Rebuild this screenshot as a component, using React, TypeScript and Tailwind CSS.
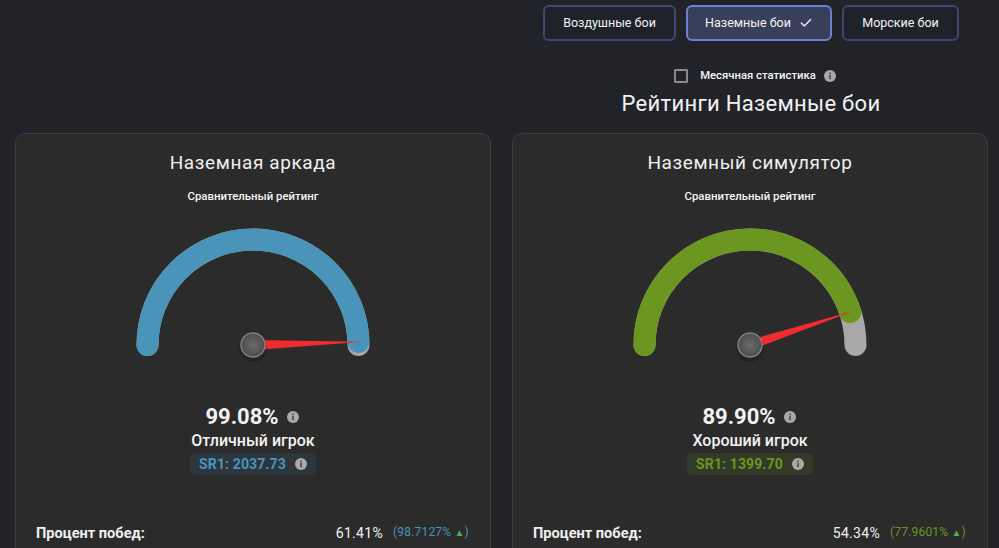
import { Check } from "lucide-react"

interface ModeCardProps {
    title: string
    percent: number
    rank: string
    sr: string
    winRate: string
    winPercentile: string
    color: string
    textColor: string
    pillColor: string
}

const CX = 130
const CY = 122
const R = 105.5

function polar(fraction: number, radius: number) {
    const angle = Math.PI * (1 - fraction)
    return { x: CX + radius * Math.cos(angle), y: CY - radius * Math.sin(angle) }
}

function InfoIcon({ size = 12 }: { size?: number }) {
    return (
        <svg width={size} height={size} viewBox="0 0 12 12" className="shrink-0">
            <circle cx="6" cy="6" r="6" fill="#a9a9a9" />
            <rect x="5" y="5" width="2" height="4.2" fill="#5a5a5a" />
            <rect x="5" y="2.6" width="2" height="1.6" fill="#5a5a5a" />
        </svg>
    )
}

function Gauge({ percent, color }: { percent: number; color: string }) {
    const start = polar(0, R)
    const end = polar(1, R)
    const value = polar(percent / 100, R)
    const tip = polar(percent / 100, 111)
    // needle base sits under the hub, perpendicular to the needle direction
    const dx = tip.x - CX
    const dy = tip.y - CY
    const len = Math.hypot(dx, dy)
    const nx = (-dy / len) * 5
    const ny = (dx / len) * 5

    return (
        <svg width="260" height="150" viewBox="0 0 260 150" className="block">
            <defs>
                <radialGradient id={`hub-${percent}`}>
                    <stop offset="0%" stopColor="#6b6b6b" />
                    <stop offset="100%" stopColor="#4c4c4c" />
                </radialGradient>
            </defs>
            <path
                d={`M ${start.x} ${start.y} A ${R} ${R} 0 0 1 ${end.x} ${end.y}`}
                fill="none"
                stroke="#a8a8a8"
                strokeWidth="22"
                strokeLinecap="round"
            />
            <path
                d={`M ${start.x} ${start.y} A ${R} ${R} 0 0 1 ${value.x} ${value.y}`}
                fill="none"
                stroke={color}
                strokeWidth="22"
                strokeLinecap="round"
            />
            <polygon
                points={`${CX + nx},${CY + ny} ${CX - nx},${CY - ny} ${tip.x},${tip.y}`}
                fill="#f12b30"
            />
            <circle cx={CX} cy={CY + 3} r="14" fill="#000" opacity="0.18" />
            <circle cx={CX} cy={CY} r="12" fill={`url(#hub-${percent})`} stroke="#808080" strokeWidth="1.5" />
        </svg>
    )
}

function ModeCard({ title, percent, rank, sr, winRate, winPercentile, color, textColor, pillColor }: ModeCardProps) {
    return (
        <div className="h-[480px] rounded-t-[10px] border border-[#3c3d3d] bg-[#2b2b2b] pt-[15px]">
            <h2 className="text-center text-[19px] leading-[28px] tracking-[0.6px] text-[#f0f0f0]">{title}</h2>
            <p className="mt-[11px] text-center text-[11.4px] leading-[16px] font-medium text-[#f5f5f5]">
                Сравнительный рейтинг
            </p>
            <div className="mt-[19px] flex justify-center">
                <Gauge percent={percent} color={color} />
            </div>
            <div className="mt-[31px] flex flex-col items-center">
                <div className="flex items-center gap-[8px] pr-[2px]">
                    <span className="text-[22px] leading-[26px] font-bold text-[#f2f2f2]">{percent.toFixed(2)}%</span>
                    <InfoIcon />
                </div>
                <div className="mt-[1px] text-[16px] leading-[20px] font-medium text-[#f2f2f2]">{rank}</div>
                <div className={`mt-[2px] flex h-[22px] w-[126px] items-center justify-center gap-[9px] rounded-[5px] ${pillColor}`}>
                    <span className={`text-[14px] leading-[20px] font-bold tracking-[0.12px] ${textColor}`}>SR1: {sr}</span>
                    <InfoIcon />
                </div>
            </div>
            <div className="mt-[47px] flex items-center justify-between pr-[21px] pl-[20px]">
                <span className="text-[14.6px] leading-[20px] font-bold text-[#f0f0f0]">Процент побед:</span>
                <div className="flex items-center gap-[10px]">
                    <span className="text-[14px] leading-[20px] tracking-[0.3px] text-[#f2f2f2]">{winRate}</span>
                    <span className={`text-[12px] leading-[20px] tracking-[0.2px] ${textColor}`}>
                        ({winPercentile} <span className="text-[10px] text-[#4caf50]">▲</span>)
                    </span>
                </div>
            </div>
        </div>
    )
}

export default function App() {
    return (
        <div className="h-[548px] w-[999px] overflow-hidden bg-[#212329] font-['Roboto',sans-serif]">
            <div className="grid grid-cols-2 gap-x-[21px] pr-[11px] pl-[15px]">
                <div />
                <div className="flex flex-col items-center pt-[5px]">
                    <div className="flex gap-[10px] pl-[2px]">
                        <button
                            type="button"
                            className="h-[36px] w-[133px] rounded-[6px] border-2 border-[#3f4670] bg-[#1f2229] text-[12.5px] text-[#f2f2f2]"
                        >
                            Воздушные бои
                        </button>
                        <button
                            type="button"
                            className="flex h-[36px] w-[146px] items-center justify-center gap-[8px] rounded-[6px] border-2 border-[#6d7fd0] bg-[#383f5a] text-[12.5px] text-[#f2f2f2]"
                        >
                            Наземные бои
                            <Check size={14} strokeWidth={2.25} />
                        </button>
                        <button
                            type="button"
                            className="h-[36px] w-[117px] rounded-[6px] border-2 border-[#3f4670] bg-[#1f2229] text-[12.5px] text-[#f2f2f2]"
                        >
                            Морские бои
                        </button>
                    </div>
                    <div className="mt-[28px] ml-[10px] flex h-[14px] items-center">
                        <span className="h-[14px] w-[14px] rounded-[1px] border-2 border-[#8a8a8a]" />
                        <span className="ml-[12px] text-[11.3px] font-medium text-[#f5f5f5]">Месячная статистика</span>
                        <span className="ml-[8px]">
                            <InfoIcon />
                        </span>
                    </div>
                    <h1 className="mt-[6px] pl-[2px] text-[22px] leading-[30px] tracking-[0.3px] text-[#f2f2f2]">
                        Рейтинги Наземные бои
                    </h1>
                </div>
            </div>
            <div className="mt-[14px] grid grid-cols-2 gap-x-[21px] pr-[11px] pl-[15px]">
                <ModeCard
                    title="Наземная аркада"
                    percent={99.08}
                    rank="Отличный игрок"
                    sr="2037.73"
                    winRate="61.41%"
                    winPercentile="98.7127%"
                    color="#4a94b9"
                    textColor="text-[#4a94b9]"
                    pillColor="bg-[#2c373d]"
                />
                <ModeCard
                    title="Наземный симулятор"
                    percent={89.9}
                    rank="Хороший игрок"
                    sr="1399.70"
                    winRate="54.34%"
                    winPercentile="77.9601%"
                    color="#6b961f"
                    textColor="text-[#6b961f]"
                    pillColor="bg-[#333a27]"
                />
            </div>
        </div>
    )
}
